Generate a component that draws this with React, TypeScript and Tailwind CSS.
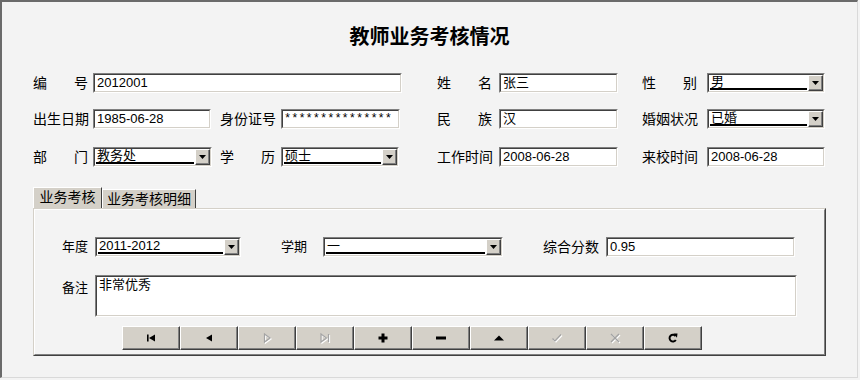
import React from "react";

type Props = { className?: string; children?: React.ReactNode };

// classic sunken edit frame
function Sunken({ className = "", children }: Props) {
  return (
    <div className={`shrink-0 border border-t-[#808080] border-l-[#808080] border-b-white border-r-white ${className}`}>
      <div className="h-full w-full border border-t-[#404040] border-l-[#404040] border-b-[#d4d0c8] border-r-[#d4d0c8] bg-white overflow-hidden">
        {children}
      </div>
    </div>
  );
}

function Raised({ className = "", children }: Props) {
  return (
    <div className={`shrink-0 border border-t-white border-l-white border-b-[#404040] border-r-[#404040] bg-[#d4d0c8] ${className}`}>
      <div className="flex h-full w-full items-center justify-center border-b border-r border-b-[#808080] border-r-[#808080]">
        {children}
      </div>
    </div>
  );
}

function TextBox({ value, className = "" }: { value: string; className?: string }) {
  return (
    <Sunken className={`h-[20px] ${className}`}>
      <div className="px-[2px] text-[13px] leading-[16px] whitespace-nowrap text-black">{value}</div>
    </Sunken>
  );
}

function ComboBox({ value, className = "" }: { value: string; className?: string }) {
  return (
    <Sunken className={`h-[20px] ${className}`}>
      <div className="flex h-full">
        <div className="flex-1 px-[1px]">
          <div className="h-[15px] border-b-2 border-black px-[1px] text-[13px] leading-[14px] text-black">{value}</div>
        </div>
        <Raised className="w-[15px] h-full">
          <svg width="7" height="4" viewBox="0 0 7 4">
            <polygon points="0,0 7,0 3.5,4" fill="#000" />
          </svg>
        </Raised>
      </div>
    </Sunken>
  );
}

function Label({ text, className = "" }: { text: string; className?: string }) {
  return (
    <div className={`shrink-0 ${className}`}>
      <div className="flex w-[55px] justify-between text-[14px] leading-[20px] text-black">
        {text.split("").map((c, i) => (
          <span key={i}>{c}</span>
        ))}
      </div>
    </div>
  );
}

const GRAY = "#a3a3a3";

function Disabled({ children }: { children: React.ReactNode }) {
  return (
    <svg width="14" height="14" viewBox="0 0 14 14">
      <g transform="translate(1,1)" stroke="#fff" fill="none" strokeWidth="1.2">{children}</g>
      <g stroke={GRAY} fill="none" strokeWidth="1.2">{children}</g>
    </svg>
  );
}

const navIcons = [
  <svg key="first" width="14" height="14" viewBox="0 0 14 14">
    <rect x="3" y="3.5" width="1.6" height="7" fill="#000" />
    <polygon points="11,3.5 5,7 11,10.5" fill="#000" />
  </svg>,
  <svg key="prev" width="14" height="14" viewBox="0 0 14 14">
    <polygon points="10,3.5 4,7 10,10.5" fill="#000" />
  </svg>,
  <Disabled key="next">
    <polygon points="4.5,3 10,7 4.5,11" />
  </Disabled>,
  <Disabled key="last">
    <polygon points="3,3 8.5,7 3,11" />
    <line x1="10.5" y1="3" x2="10.5" y2="11" />
  </Disabled>,
  <svg key="add" width="14" height="14" viewBox="0 0 14 14">
    <rect x="5.5" y="2.5" width="3" height="9" fill="#000" />
    <rect x="2.5" y="5.5" width="9" height="3" fill="#000" />
  </svg>,
  <svg key="del" width="14" height="14" viewBox="0 0 14 14">
    <rect x="2" y="5.5" width="10" height="3" fill="#000" />
  </svg>,
  <svg key="edit" width="14" height="14" viewBox="0 0 14 14">
    <polygon points="2,9.5 7,4.5 12,9.5" fill="#000" />
  </svg>,
  <Disabled key="post">
    <polyline points="2.5,7.5 5,10 11,3.5" />
  </Disabled>,
  <Disabled key="cancel">
    <line x1="3" y1="3" x2="11" y2="11" />
    <line x1="11" y1="3" x2="3" y2="11" />
  </Disabled>,
  <svg key="refresh" width="14" height="14" viewBox="0 0 14 14">
    <path d="M9.6 5 A3.4 3.4 0 1 0 9.8 9" stroke="#000" strokeWidth="2" fill="none" />
    <polygon points="7.5,2.5 11.5,2.5 11,6.8" fill="#000" />
  </svg>,
];

export default function App() {
  return (
    <div className="w-[860px] h-[380px] bg-[#f3f3f3] font-['Liberation_Sans','Noto_Sans_CJK_SC',sans-serif] text-black">
      <div className="w-[858px] h-[378px] border-t-2 border-l-2 border-t-[#6a6a6a] border-l-[#6a6a6a] border-b border-r border-b-[#d9d9d9] border-r-[#d9d9d9] flex flex-col">
        <div className="mt-[25px] h-[20px] text-center text-[20px] leading-[20px] font-bold">教师业务考核情况</div>

        {/* row 1 */}
        <div className="mt-[26px] flex items-center pl-[31px]">
          <Label text="编号" className="w-[60px]" />
          <TextBox value="2012001" className="w-[309px]" />
          <Label text="姓名" className="ml-[35px] w-[62px]" />
          <TextBox value="张三" className="w-[119px]" />
          <Label text="性别" className="ml-[24px] w-[65px]" />
          <ComboBox value="男" className="w-[118px]" />
        </div>

        {/* row 2 */}
        <div className="mt-[16px] flex items-center pl-[31px]">
          <Label text="出生日期" className="w-[60px]" />
          <TextBox value="1985-06-28" className="w-[118px]" />
          <Label text="身份证号" className="ml-[9px] w-[61px]" />
          <Sunken className="h-[20px] w-[119px]">
            <div className="pl-[1px] font-['Liberation_Mono',monospace] text-[12px] leading-[17px] whitespace-nowrap">
              ***************
            </div>
          </Sunken>
          <Label text="民族" className="ml-[37px] w-[62px]" />
          <TextBox value="汉" className="w-[119px]" />
          <Label text="婚姻状况" className="ml-[24px] w-[65px]" />
          <ComboBox value="已婚" className="w-[118px]" />
        </div>

        {/* row 3 */}
        <div className="mt-[18px] flex items-center pl-[31px]">
          <Label text="部门" className="w-[60px]" />
          <ComboBox value="教务处" className="w-[119px]" />
          <Label text="学历" className="ml-[8px] w-[61px]" />
          <ComboBox value="硕士" className="w-[118px]" />
          <Label text="工作时间" className="ml-[38px] w-[62px]" />
          <TextBox value="2008-06-28" className="w-[119px]" />
          <Label text="来校时间" className="ml-[24px] w-[65px]" />
          <TextBox value="2008-06-28" className="w-[118px]" />
        </div>

        {/* tabs */}
        <div className="ml-[31px] mt-[20px] flex h-[21px] items-end">
          <div className="h-[21px] w-[69px] border-t border-l border-r border-t-white border-l-white border-r-[#404040] bg-[#d4d0c8] text-center text-[14px] leading-[19px]">
            业务考核
          </div>
          <div className="h-[19px] w-[94px] border-t border-l border-r border-t-white border-l-white border-r-[#404040] bg-[#d4d0c8] text-center text-[14px] leading-[18px]">
            业务考核明细
          </div>
        </div>

        {/* panel */}
        <div className="ml-[31px] h-[148px] w-[793px] border border-t-[#d4d0c8] border-l-[#d4d0c8] border-b-[#404040] border-r-[#404040]">
          <div className="h-full w-full border border-t-white border-l-white border-b-[#808080] border-r-[#808080]">
            <div className="mt-[27px] flex items-center pl-[27px]">
              <div className="w-[33px] shrink-0 text-[13px] leading-[20px]">年度</div>
              <ComboBox value="2011-2012" className="w-[146px]" />
              <div className="ml-[40px] w-[42px] shrink-0 text-[13px] leading-[20px]">学期</div>
              <ComboBox value="一" className="w-[180px]" />
              <div className="ml-[40px] w-[63px] shrink-0 text-[14px] leading-[20px]">综合分数</div>
              <TextBox value="0.95" className="w-[189px]" />
            </div>

            <div className="mt-[18px] flex pl-[27px]">
              <div className="w-[33px] shrink-0 pt-[5px] text-[13px] leading-[16px]">备注</div>
              <Sunken className="h-[42px] w-[702px]">
                <div className="px-[2px] text-[13px] leading-[16px]">非常优秀</div>
              </Sunken>
            </div>

            <div className="mt-[9px] flex pl-[87px]">
              {navIcons.map((icon, i) => (
                <Raised key={i} className="h-[24px] w-[58px]">
                  {icon}
                </Raised>
              ))}
            </div>
          </div>
        </div>
      </div>
    </div>
  );
}
